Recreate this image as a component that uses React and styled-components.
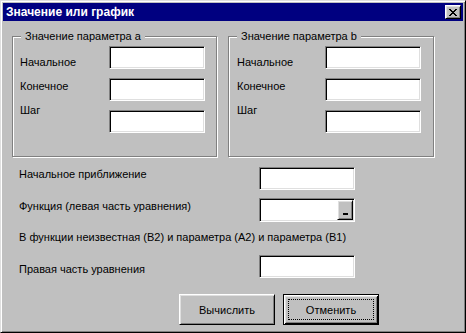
import styled, { createGlobalStyle } from 'styled-components';

const GlobalStyle = createGlobalStyle`
  html, body {
    margin: 0;
    padding: 0;
    background: #c0c0c0;
  }
  body {
    font-family: 'Liberation Sans', Arial, sans-serif;
    font-size: 11px;
    color: #000;
  }
  * {
    box-sizing: border-box;
  }
`;

const Window = styled.div`
  width: 466px;
  height: 333px;
  background: #c0c0c0;
  border: 1px solid;
  border-color: #dfdfdf #000 #000 #dfdfdf;
  box-shadow: inset 1px 1px 0 #fff, inset -1px -1px 0 #808080;
  padding: 2px;
  display: flex;
  flex-direction: column;
`;

const TitleBar = styled.div`
  height: 18px;
  background: #000080;
  display: flex;
  align-items: center;
  justify-content: space-between;
  padding: 0 2px 0 3px;
`;

const TitleText = styled.span`
  color: #fff;
  font-weight: 700;
  font-size: 12px;
  line-height: 14px;
`;

const CloseButton = styled.div`
  width: 16px;
  height: 14px;
  background: #c0c0c0;
  border: 1px solid;
  border-color: #fff #000 #000 #fff;
  box-shadow: inset 1px 1px 0 #dfdfdf, inset -1px -1px 0 #808080;
  display: flex;
  align-items: center;
  justify-content: center;
`;

const Body = styled.div`
  padding: 9px 0 0 9px;
  display: flex;
  flex-direction: column;
`;

const Groups = styled.div`
  display: flex;
  gap: 11px;
`;

const Group = styled.fieldset`
  width: ${(p) => p.$w}px;
  height: 127px;
  margin: 0;
  padding: 0;
  border: 1px solid #808080;
  box-shadow: 1px 1px 0 #fff, inset 1px 1px 0 #fff;
  min-width: 0;
`;

const Legend = styled.legend`
  margin-left: 8px;
  padding: 0 4px;
  line-height: 13px;
  font-size: 11px;
  background: #c0c0c0;
`;

const GroupBody = styled.div`
  display: grid;
  grid-template-columns: 1fr 96px;
  padding: 3px ${(p) => p.$pr}px 0 ${(p) => p.$pl}px;
`;

const LabelColumn = styled.div`
  display: flex;
  flex-direction: column;
  gap: 11px;
  padding-top: 10px;
`;

const FieldColumn = styled.div`
  display: flex;
  flex-direction: column;
  gap: 9px;
`;

const Label = styled.span`
  line-height: 13px;
  white-space: nowrap;
`;

const Field = styled.input`
  width: 96px;
  height: 23px;
  margin: 0;
  border: 1px solid;
  border-color: #808080 #fff #fff #808080;
  box-shadow: inset 1px 1px 0 #000, inset -1px -1px 0 #dfdfdf;
  background: #fff;
  padding: 2px 3px;
  font: inherit;
  outline: none;
`;

const Combo = styled.div`
  width: 96px;
  height: 24px;
  border: 1px solid;
  border-color: #808080 #fff #fff #808080;
  box-shadow: inset 1px 1px 0 #000, inset -1px -1px 0 #dfdfdf;
  background: #fff;
  display: flex;
  justify-content: flex-end;
  padding: 1px;
`;

const ComboButton = styled.div`
  width: 16px;
  height: 100%;
  background: #c0c0c0;
  border: 1px solid;
  border-color: #fff #000 #000 #fff;
  box-shadow: inset 1px 1px 0 #dfdfdf, inset -1px -1px 0 #808080;
  display: flex;
  align-items: flex-end;
  justify-content: center;
  padding-bottom: 4px;
`;

const Dash = styled.span`
  width: 5px;
  height: 2px;
  background: #000;
`;

const Rows = styled.div`
  margin-top: 10px;
  padding-left: 7px;
  display: flex;
  flex-direction: column;
`;

const Row = styled.div`
  height: ${(p) => p.$h}px;
  display: grid;
  grid-template-columns: 240px 96px;
  align-items: start;
`;

const RowLabel = styled.span`
  line-height: 13px;
  padding-top: ${(p) => p.$top}px;
  white-space: nowrap;
`;

const Buttons = styled.div`
  display: flex;
  gap: 8px;
  padding-left: 167px;
`;

const Button = styled.button`
  position: relative;
  width: 96px;
  height: 31px;
  margin: 0;
  padding: 0;
  background: #c0c0c0;
  font: inherit;
  color: #000;
  border: 1px solid;
  border-color: #fff #000 #000 #fff;
  box-shadow: inset 1px 1px 0 #dfdfdf, inset -1px -1px 0 #808080;

  ${(p) =>
    p.$default &&
    `
    border: 1px solid #000;
    box-shadow: inset 1px 1px 0 #fff, inset -1px -1px 0 #000,
      inset 2px 2px 0 #dfdfdf, inset -2px -2px 0 #808080;
    &::after {
      content: '';
      position: absolute;
      inset: 4px;
      border: 1px dotted #000;
    }
  `}
`;

const closeGlyph = [
  '11000011',
  '01100110',
  '00111100',
  '00011000',
  '00111100',
  '01100110',
  '11000011',
];

function CloseIcon() {
  return (
    <svg width="8" height="7" viewBox="0 0 8 7" shapeRendering="crispEdges">
      {closeGlyph.map((row, y) =>
        row.split('').map((c, x) =>
          c === '1' ? <rect key={`${x}-${y}`} x={x} y={y} width="1" height="1" fill="#000" /> : null
        )
      )}
    </svg>
  );
}

function ParamGroup({ title, width, pl, pr }) {
  return (
    <Group $w={width}>
      <Legend>{title}</Legend>
      <GroupBody $pl={pl} $pr={pr}>
        <LabelColumn>
          <Label>Начальное</Label>
          <Label>Конечное</Label>
          <Label>Шаг</Label>
        </LabelColumn>
        <FieldColumn>
          <Field />
          <Field />
          <Field />
        </FieldColumn>
      </GroupBody>
    </Group>
  );
}

export default function App() {
  return (
    <>
      <GlobalStyle />
      <Window>
        <TitleBar>
          <TitleText>Значение или график</TitleText>
          <CloseButton>
            <CloseIcon />
          </CloseButton>
        </TitleBar>
        <Body>
          <Groups>
            <ParamGroup title="Значение параметра a" width={205} pl={7} pr={11} />
            <ParamGroup title="Значение параметра b" width={206} pl={8} pr={12} />
          </Groups>
          <Rows>
            <Row $h={31}>
              <RowLabel $top={1}>Начальное приближение</RowLabel>
              <Field />
            </Row>
            <Row $h={32}>
              <RowLabel $top={2}>Функция (левая часть уравнения)</RowLabel>
              <Combo>
                <ComboButton>
                  <Dash />
                </ComboButton>
              </Combo>
            </Row>
            <Row $h={25}>
              <RowLabel $top={1}>В функции неизвестная (В2) и параметра (А2) и параметра (В1)</RowLabel>
            </Row>
            <Row $h={39}>
              <RowLabel $top={8}>Правая часть уравнения</RowLabel>
              <Field />
            </Row>
          </Rows>
          <Buttons>
            <Button>Вычислить</Button>
            <Button $default>Отменить</Button>
          </Buttons>
        </Body>
      </Window>
    </>
  );
}
